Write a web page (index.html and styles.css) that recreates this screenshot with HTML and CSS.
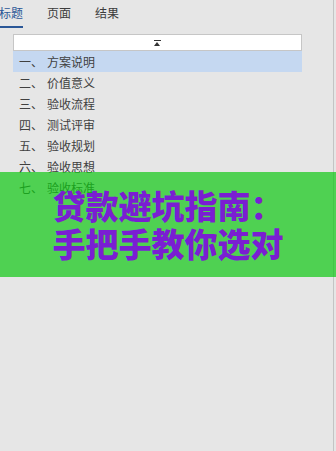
FILE: index.html
```html
<!DOCTYPE html>
<html lang="zh">
<head>
<meta charset="utf-8">
<link rel="stylesheet" href="styles.css">
</head>
<body>
<div class="page">
  <div class="tabs">
    <div class="tab active">标题</div>
    <div class="tab">页面</div>
    <div class="tab">结果</div>
  </div>
  <div class="panel">
    <div class="search"><span class="collapse"></span></div>
    <ul class="list">
      <li class="item selected"><span class="num">一、</span><span>方案说明</span></li>
      <li class="item"><span class="num">二、</span><span>价值意义</span></li>
      <li class="item"><span class="num">三、</span><span>验收流程</span></li>
      <li class="item"><span class="num">四、</span><span>测试评审</span></li>
      <li class="item"><span class="num">五、</span><span>验收规划</span></li>
      <li class="item"><span class="num">六、</span><span>验收思想</span></li>
      <li class="item"><span class="num">七、</span><span>验收标准</span></li>
    </ul>
  </div>
  <div class="banner">
    <div class="banner-line">贷款避坑指南：</div>
    <div class="banner-line">手把手教你选对</div>
  </div>
</div>
</body>
</html>
```
FILE: styles.css
```css
html, body {
  margin: 0;
  padding: 0;
  background: #e6e6e6;
}
body {
  font-family: "Noto Sans CJK SC", "Noto Sans", sans-serif;
  width: 336px;
  height: 451px;
  overflow: hidden;
}
.page {
  position: relative;
  width: 333px;
  height: 451px;
  border-right: 1px solid #c4c4c4;
  background: #e6e6e6;
}
.tabs {
  display: flex;
  gap: 24px;
  height: 30px;
  margin-left: -1px;
}
.tab {
  font-size: 12px;
  line-height: 26px;
  height: 28px;
  color: #3c3c3c;
  box-sizing: border-box;
}
.tab.active {
  color: #2b5797;
  border-bottom: 2px solid #2b5797;
}
.panel {
  margin-top: 4px;
  margin-left: 13px;
  width: 289px;
}
.search {
  height: 17px;
  box-sizing: border-box;
  background: #ffffff;
  border: 1px solid #c6c6c6;
  display: flex;
  align-items: center;
  justify-content: center;
}
.collapse {
  position: relative;
  width: 7px;
  height: 6px;
  border-top: 1px solid #333;
  box-sizing: border-box;
}
.collapse::after {
  content: "";
  position: absolute;
  left: 0;
  top: 1px;
  border-left: 3.5px solid transparent;
  border-right: 3.5px solid transparent;
  border-bottom: 4px solid #333;
}
.list {
  list-style: none;
  margin: 0;
  padding: 0;
}
.item {
  height: 21px;
  display: flex;
  align-items: center;
  font-size: 12px;
  color: #404040;
  padding-left: 6px;
}
.item.selected {
  background: #c5d8f1;
}
.num {
  width: 28px;
}
.banner {
  position: absolute;
  left: 0;
  top: 172px;
  width: 336px;
  height: 105px;
  box-sizing: border-box;
  padding-top: 14px;
  background: rgba(14, 200, 19, 0.7);
  text-align: center;
}
.banner-line {
  font-size: 33px;
  line-height: 38px;
  font-weight: 900;
  color: #7a1ed2;
}
```
